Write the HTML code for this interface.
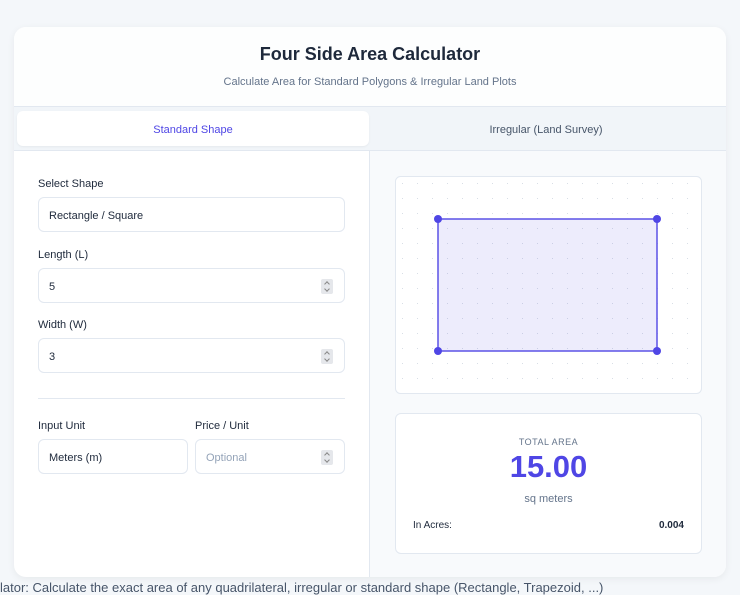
<!DOCTYPE html>
<html><head><style>
*{box-sizing:border-box;margin:0;padding:0}
body{width:740px;height:586px;overflow:hidden;background:#f4f7fa;font-family:"Liberation Sans",sans-serif;position:relative}
.card{position:absolute;left:14px;top:27px;width:712px;height:550px;background:#fff;border-radius:12px;box-shadow:0 2px 8px rgba(0,0,0,.06);overflow:hidden}
.hdr{height:80px;border-bottom:1px solid #e2e8f0;text-align:center;background:#fdfefe}
.hdr h1{font-size:18px;font-weight:bold;color:#1e293b;padding-top:17px}
.hdr p{font-size:11px;color:#64748b;margin-top:11px}
.tabs{position:absolute;top:80px;left:0;width:712px;height:44px;background:#f1f5f9;border-bottom:1px solid #e2e8f0}
.tab{position:absolute;top:4px;height:35px;line-height:38px;text-align:center;font-size:11px}
.t1{left:3px;width:352px;background:#fff;border-radius:6px;color:#4f46e5;box-shadow:0 1px 2px rgba(0,0,0,.05)}
.t2{left:356px;width:352px;color:#475569}
.right{position:absolute;left:355px;top:124px;width:357px;height:426px;background:#f8fafc;border-left:1px solid #e2e8f0}
.lbl{position:absolute;font-size:11px;color:#1e293b}
.inp{position:absolute;height:35px;border:1px solid #e2e8f0;border-radius:6px;font-size:11px;color:#1e293b;padding-left:10px;line-height:36px;background:#fff}
.spin{position:absolute;right:11px;top:10px;width:12px;height:15px;background:#e5e7eb;border-radius:2px}
.spin:before,.spin:after{content:"";position:absolute;left:4px;width:3px;height:3px;border-left:1px solid #888;border-top:1px solid #888}
.spin:before{top:3px;transform:rotate(45deg)}
.spin:after{top:8px;transform:rotate(225deg)}
.res{position:absolute;left:395px;top:413px;width:307px;height:141px;background:#fff;border:1px solid #e2e8f0;border-radius:6px;text-align:center}
</style></head><body>
<div class="card">
<div class="hdr"><h1>Four Side Area Calculator</h1><p>Calculate Area for Standard Polygons &amp; Irregular Land Plots</p></div>
<div class="tabs"><div class="tab t1">Standard Shape</div><div class="tab t2">Irregular (Land Survey)</div></div>
<div class="right"></div>
</div>
<div class="lbl" style="left:38px;top:178px">Select Shape</div>
<div class="inp" style="left:38px;top:197px;width:307px">Rectangle / Square</div>
<div class="lbl" style="left:38px;top:249px">Length (L)</div>
<div class="inp" style="left:38px;top:268px;width:307px">5<div class="spin"></div></div>
<div class="lbl" style="left:38px;top:319px">Width (W)</div>
<div class="inp" style="left:38px;top:338px;width:307px">3<div class="spin"></div></div>
<div style="position:absolute;left:38px;top:398px;width:307px;height:1px;background:#e2e8f0"></div>
<div class="lbl" style="left:38px;top:420px">Input Unit</div>
<div class="lbl" style="left:195px;top:420px">Price / Unit</div>
<div class="inp" style="left:38px;top:439px;width:150px">Meters (m)</div>
<div class="inp" style="left:195px;top:439px;width:150px;color:#94a3b8">Optional<div class="spin"></div></div>
<svg style="position:absolute;left:395px;top:176px" width="307" height="218">
<defs><pattern id="d" x="7" y="7" width="15" height="15" patternUnits="userSpaceOnUse"><rect x="0" y="0" width="1" height="1" fill="#d8dee6"/></pattern></defs>
<rect x="0.5" y="0.5" width="306" height="217" rx="5" fill="#fff" stroke="#e2e8f0"/>
<rect x="1" y="1" width="305" height="216" fill="url(#d)"/>
<rect x="43" y="43" width="219" height="132" fill="rgba(79,70,229,.1)" stroke="#5b52e6" stroke-width="1.5"/>
<circle cx="43" cy="43" r="4" fill="#4f46e5"/><circle cx="262" cy="43" r="4" fill="#4f46e5"/>
<circle cx="43" cy="175" r="4" fill="#4f46e5"/><circle cx="262" cy="175" r="4" fill="#4f46e5"/>
</svg>
<div class="res">
<div style="font-size:9px;color:#64748b;letter-spacing:.5px;margin-top:23px">TOTAL AREA</div>
<div style="font-size:31px;font-weight:900;color:#4f46e5;margin-top:2px">15.00</div>
<div style="font-size:11px;color:#64748b;margin-top:8px">sq meters</div>
<div style="position:absolute;left:17px;top:106px;font-size:10px;color:#1e293b">In Acres:</div>
<div style="position:absolute;right:17px;top:106px;font-size:10px;font-weight:bold;color:#1e293b">0.004</div>
</div>
<div style="position:absolute;left:0;top:580px;font-size:13px;color:#475569;white-space:nowrap">lator: Calculate the exact area of any quadrilateral, irregular or standard shape (Rectangle, Trapezoid, ...)</div>
</body></html>
